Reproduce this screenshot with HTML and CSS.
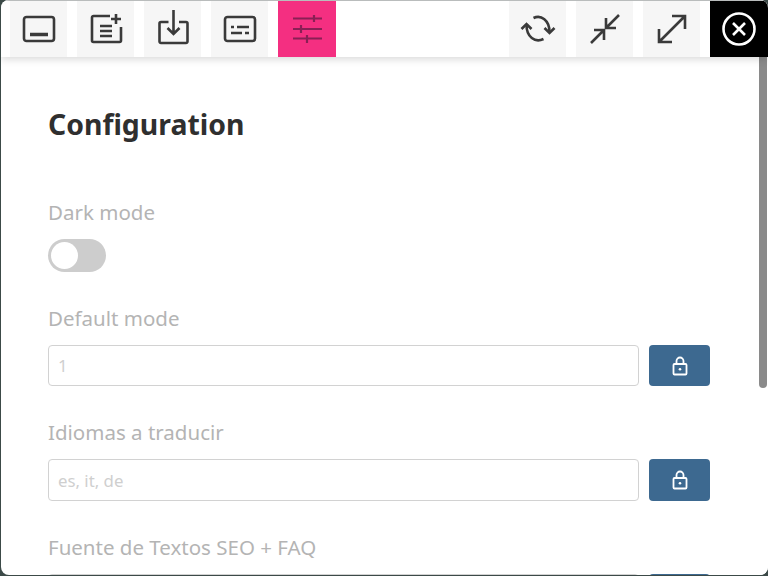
FILE: index.html
```html
<!DOCTYPE html>
<html lang="en">
<head>
<meta charset="utf-8">
<title>Configuration</title>
<link rel="stylesheet" href="styles.css">
</head>
<body>
<div class="window">
  <header class="toolbar">
    <div class="tools">
      <button class="tool"><svg viewBox="0 0 34 34"><rect x="2" y="5" width="30" height="24" rx="2.500"/><path d="M8 22.500h18" class="thick"/></svg></button>
      <button class="tool"><svg viewBox="0 0 34 34"><path d="M21 4H4.500A1.500 1.500 0 0 0 3 5.500V28.500A1.500 1.500 0 0 0 4.500 30H30.500A1.500 1.500 0 0 0 32 28.500V15"/><path d="M11 14h12M11 19h12M11 24h12M27 2v10M22 7h10"/></svg></button>
      <button class="tool"><svg viewBox="0 0 34 34"><path d="M12.500 10H5A1.500 1.500 0 0 0 3.500 11.500V29.500A1.500 1.500 0 0 0 5 31H30A1.500 1.500 0 0 0 31.500 29.500V11.500A1.500 1.500 0 0 0 30 10H23"/><path d="M17.500 -2V22M11.500 16l6 6 6-6"/></svg></button>
      <button class="tool"><svg viewBox="0 0 34 34"><rect x="2" y="5" width="30" height="24" rx="2.500"/><path d="M8 15h3M14 15h12M8 21h11M22 21h4"/></svg></button>
      <button class="tool tool-active"><svg viewBox="0 0 34 34"><path d="M3 6.500H32M24 3V10M3 17H32M11 13V21M3 26.500H32M17 23V31"/></svg></button>
    </div>
    <div class="tools tools-right">
      <button class="tool"><svg viewBox="0 0 34 34"><path d="M12.500 6C20 2.500 28.500 8 28.500 20M22.500 27C14 31 5.500 25 5.500 13"/><path d="M23.500 16L28.500 21L33.500 16M.5 17L5.500 12L10.500 17"/></svg></button>
      <button class="tool"><svg viewBox="0 0 34 34"><path d="M3 31L15 19M6 18H16V28M31 3L19 15M18 6V16H28"/></svg></button>
      <button class="tool"><svg viewBox="0 0 34 34"><path d="M4 30L30 4M17 4H30V17M4 17V30H17"/></svg></button>
      <button class="close"><svg viewBox="0 0 34 34"><circle cx="17" cy="17" r="15.500"/><path d="M11 11L23 23M23 11L11 23"/></svg></button>
    </div>
  </header>
  <div class="content">
    <main class="panel">
      <h1 class="title">Configuration</h1>
      <section class="field">
        <label class="label">Dark mode</label>
        <div class="toggle"><span class="knob"></span></div>
      </section>
      <section class="field">
        <label class="label">Default mode</label>
        <div class="row">
          <input class="input" placeholder="1">
          <button class="lock"><svg viewBox="0 0 16 20"><path d="M4.500 8V5a3.500 3.500 0 0 1 7 0V8"/><rect x="1.500" y="8" width="13" height="10.500" rx="1"/><circle cx="8" cy="13.200" r="1.300" class="dot"/></svg></button>
        </div>
      </section>
      <section class="field">
        <label class="label">Idiomas a traducir</label>
        <div class="row">
          <input class="input" placeholder="es, it, de">
          <button class="lock"><svg viewBox="0 0 16 20"><path d="M4.500 8V5a3.500 3.500 0 0 1 7 0V8"/><rect x="1.500" y="8" width="13" height="10.500" rx="1"/><circle cx="8" cy="13.200" r="1.300" class="dot"/></svg></button>
        </div>
      </section>
      <section class="field">
        <label class="label">Fuente de Textos SEO + FAQ</label>
        <div class="row">
          <input class="input">
          <button class="lock"></button>
        </div>
      </section>
    </main>
    <div class="scrollbar"><div class="thumb"></div></div>
  </div>
</div>
</body>
</html>
```
FILE: styles.css
```css
* { box-sizing: border-box; }
html, body { margin: 0; height: 100%; overflow: hidden; }
body { background: #3c4a48; font-family: "Noto Sans", "Open Sans", sans-serif; }
.window {
  height: 575px;
  margin-left: 1px;
  background: #fff;
  border-radius: 8px;
  overflow: hidden;
  display: flex;
  flex-direction: column;
}
.toolbar {
  flex: none;
  height: 57px;
  display: flex;
  justify-content: space-between;
  background: #fff;
  border-top: 1px solid #b9bcbc;
  box-shadow: 0 2px 8px rgba(0,0,0,.16);
  position: relative;
  z-index: 1;
}
.tools { display: flex; gap: 10px; padding-left: 9px; }
.tools-right { padding-left: 0; }
.tool, .close {
  width: 57px;
  height: 56px;
  border: 0;
  padding: 0;
  background: #f6f6f6;
  display: flex;
  align-items: center;
  justify-content: center;
}
.tool svg, .close svg {
  width: 34px;
  height: 34px;
  fill: none;
  stroke: #3a3a3a;
  stroke-width: 2.600;
  overflow: visible;
}
.tool svg .thick { stroke-width: 3.400; }
.tool-active { background: #f42f81; width: 58px; }
.tool-active svg { stroke: #8a1f55; stroke-width: 2.200; }
.close { background: #000; width: 58px; }
.close svg { stroke: #fff; stroke-width: 2.600; }
.content { flex: 1; min-height: 0; display: flex; }
.panel {
  flex: 1;
  min-width: 0;
  padding: 47px 48px 0 47px;
  overflow: hidden;
}
.title {
  margin: 0 0 53.900px;
  font-size: 28.400px;
  line-height: 40px;
  font-weight: 700;
  color: #2f2f2f;
}
.field { margin-bottom: 32px; }
.label {
  display: block;
  font-size: 20.500px;
  line-height: 28px;
  color: #b4b4b4;
  margin-bottom: 13px;
}
.toggle {
  width: 58px;
  height: 33px;
  border-radius: 17px;
  background: #cdcdcd;
  padding: 3px;
}
.knob { display: block; width: 27px; height: 27px; border-radius: 50%; background: #fff; }
.row { display: flex; gap: 10px; width: 662px; }
.input {
  flex: 1;
  min-width: 0;
  height: 41.500px;
  border: 1px solid #d2d2d2;
  border-radius: 4px;
  padding: 0 9px;
  font: 16.800px "Noto Sans", sans-serif;
  background: #fff;
}
.input::placeholder { color: #cfcfcf; opacity: 1; }
.lock {
  width: 61px;
  height: 41.500px;
  flex: none;
  border: 0;
  border-radius: 4px;
  background: #3d6990;
  display: flex;
  align-items: center;
  justify-content: center;
  padding: 0;
}
.lock svg { width: 16px; height: 20px; fill: none; stroke: #fff; stroke-width: 1.800; }
.lock .dot { fill: #fff; stroke: none; }
.scrollbar { flex: none; width: 10px; background: #fff; }
.thumb { width: 8px; margin-left: 1px; height: 331px; background: #8a8a8a; border-radius: 0 0 4px 4px; }
```
